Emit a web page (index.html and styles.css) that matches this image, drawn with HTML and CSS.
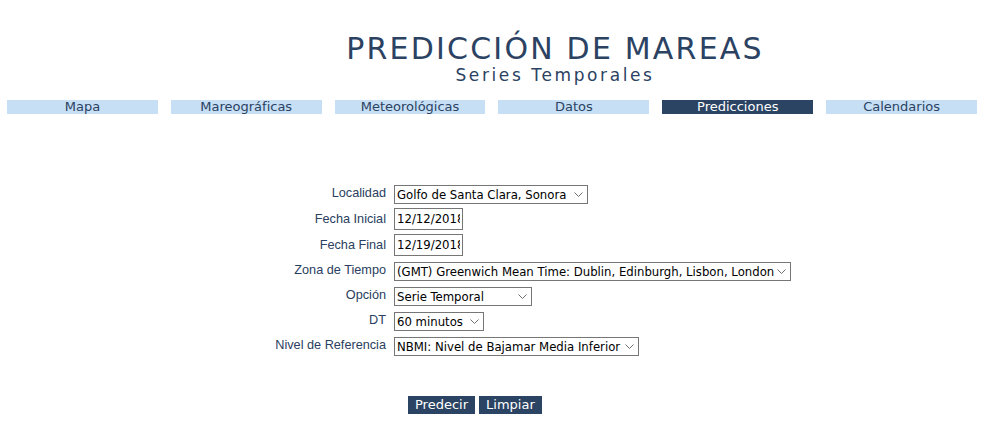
FILE: index.html
```html
<!DOCTYPE html>
<html lang="es">
<head>
<meta charset="utf-8">
<title>Predicción de Mareas</title>
<link rel="stylesheet" href="styles.css">
</head>
<body>
<header class="header">
  <h1 class="title">PREDICCIÓN DE MAREAS</h1>
  <h2 class="subtitle">Series Temporales</h2>
</header>
<nav class="nav">
  <a class="nav-item">Mapa</a>
  <a class="nav-item">Mareográficas</a>
  <a class="nav-item">Meteorológicas</a>
  <a class="nav-item">Datos</a>
  <a class="nav-item active">Predicciones</a>
  <a class="nav-item">Calendarios</a>
</nav>
<form class="form">
  <div class="grid">
    <label class="lbl">Localidad</label>
    <span class="sel w-loc"><select class="ctl"><option>Golfo de Santa Clara, Sonora</option></select><svg class="chev" width="9" height="5" viewBox="0 0 9 5"><path d="M0.5 0.5 L4.5 4.5 L8.5 0.5" fill="none" stroke="#6f6f6f" stroke-width="1"/></svg></span>

    <label class="lbl">Fecha Inicial</label>
    <span><input class="inp" type="text" value="12/12/2018"></span>

    <label class="lbl">Fecha Final</label>
    <span><input class="inp" type="text" value="12/19/2018"></span>

    <label class="lbl">Zona de Tiempo</label>
    <span class="sel w-zona"><select class="ctl"><option>(GMT) Greenwich Mean Time: Dublin, Edinburgh, Lisbon, London</option></select><svg class="chev" width="9" height="5" viewBox="0 0 9 5"><path d="M0.5 0.5 L4.5 4.5 L8.5 0.5" fill="none" stroke="#6f6f6f" stroke-width="1"/></svg></span>

    <label class="lbl">Opción</label>
    <span class="sel w-op"><select class="ctl"><option>Serie Temporal</option></select><svg class="chev" width="9" height="5" viewBox="0 0 9 5"><path d="M0.5 0.5 L4.5 4.5 L8.5 0.5" fill="none" stroke="#6f6f6f" stroke-width="1"/></svg></span>

    <label class="lbl">DT</label>
    <span class="sel w-dt"><select class="ctl"><option>60 minutos</option></select><svg class="chev" width="9" height="5" viewBox="0 0 9 5"><path d="M0.5 0.5 L4.5 4.5 L8.5 0.5" fill="none" stroke="#6f6f6f" stroke-width="1"/></svg></span>

    <label class="lbl">Nivel de Referencia</label>
    <span class="sel w-niv"><select class="ctl"><option>NBMI: Nivel de Bajamar Media Inferior</option></select><svg class="chev" width="9" height="5" viewBox="0 0 9 5"><path d="M0.5 0.5 L4.5 4.5 L8.5 0.5" fill="none" stroke="#6f6f6f" stroke-width="1"/></svg></span>
  </div>
  <div class="buttons">
    <button type="button" class="btn">Predecir</button>
    <button type="button" class="btn">Limpiar</button>
  </div>
</form>
</body>
</html>
```
FILE: styles.css
```css
html, body {
  margin: 0;
  padding: 0;
  background: #ffffff;
}
body {
  font-family: "DejaVu Sans", Verdana, sans-serif;
  color: #2a4060;
}
.header {
  padding: 34px 0 0 125px;
  text-align: center;
}
.title {
  margin: 0;
  font-weight: normal;
  font-size: 30px;
  line-height: 30px;
  letter-spacing: 2.2px;
  color: #2b4262;
}
.subtitle {
  margin: 1.5px 0 0;
  font-weight: normal;
  font-size: 17px;
  line-height: 19px;
  letter-spacing: 2.6px;
  color: #2b4262;
}
.nav {
  display: grid;
  grid-template-columns: repeat(6, 1fr);
  column-gap: 13px;
  padding: 0 8px 0 7px;
  margin-top: 15.5px;
}
.nav-item {
  display: block;
  height: 14px;
  line-height: 14px;
  font-size: 13px;
  text-align: center;
  background: #c6dff5;
  color: #2b4262;
}
.nav-item.active {
  background: #2c4463;
  color: #ffffff;
}
.form {
  margin-top: 66.5px;
}
.grid {
  display: grid;
  grid-template-columns: 118px auto;
  grid-template-rows: 25px 26px 26px 25px 25px 25px 25px;
  column-gap: 8px;
  align-items: center;
  justify-items: start;
  padding-left: 268px;
}
.lbl {
  justify-self: end;
  font-family: "Liberation Sans", Arial, sans-serif;
  font-size: 12.7px;
  color: #2a4060;
  white-space: nowrap;
}
.sel {
  position: relative;
  display: inline-block;
  height: 19px;
}
.ctl {
  appearance: none;
  -webkit-appearance: none;
  box-sizing: border-box;
  width: 100%;
  height: 19px;
  margin: 0;
  padding: 0 16px 0 2px;
  border: 1px solid #767676;
  border-radius: 0;
  background: #ffffff;
  font-family: "DejaVu Sans Condensed", Tahoma, sans-serif;
  font-size: 13px;
  line-height: 17px;
  color: #000000;
  outline: none;
}
.chev {
  position: absolute;
  right: 5px;
  top: 8px;
  pointer-events: none;
}
.w-loc { width: 194px; }
.w-zona { width: 397px; }
.w-op { width: 138px; }
.w-dt { width: 90px; }
.w-niv { width: 245px; }
.inp {
  box-sizing: border-box;
  width: 69px;
  height: 22px;
  margin: 0;
  padding: 0 2px;
  border: 1px solid #767676;
  border-radius: 0;
  font-family: "DejaVu Sans Condensed", Tahoma, sans-serif;
  font-size: 13px;
  color: #000000;
  display: block;
}
.buttons {
  display: flex;
  gap: 4px;
  padding-left: 408px;
  margin-top: 38.5px;
}
.btn {
  box-sizing: border-box;
  height: 18px;
  margin: 0;
  padding: 0 7px;
  border: none;
  border-radius: 0;
  background: #2c4463;
  color: #ffffff;
  font-family: "DejaVu Sans", Verdana, sans-serif;
  font-size: 13px;
  line-height: 18px;
}
```
